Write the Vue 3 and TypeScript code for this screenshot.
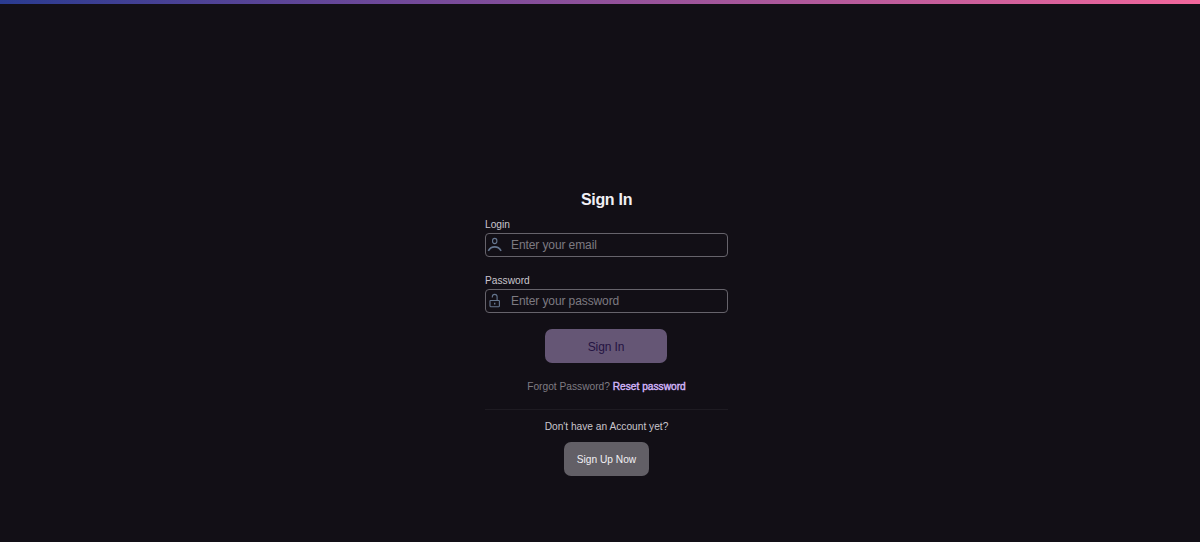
<template>
  <div class="page">
    <div class="top-bar"></div>
    <main class="content">
      <form class="form" @submit.prevent>
        <h1 class="title">Sign In</h1>

        <label class="label" for="login">Login</label>
        <div class="field">
          <svg class="icon" viewBox="0 0 16 16" fill="none">
            <ellipse cx="7.7" cy="4" rx="2.2" ry="2.6" stroke="currentColor" stroke-width="1.1" />
            <path d="M1.3 13.8C2.9 11 5 9.9 7.7 9.9s4.8 1.1 6.4 3.9" stroke="currentColor" stroke-width="1.6" />
          </svg>
          <input id="login" v-model="email" class="input" type="email" placeholder="Enter your email" />
        </div>

        <label class="label" for="password">Password</label>
        <div class="field">
          <svg class="icon" viewBox="0 0 16 16" fill="none" stroke="currentColor" stroke-width="1.1">
            <rect x="3" y="7.5" width="9.4" height="6.2" rx="0.6" />
            <path d="M5.3 4.6V3.8a2.4 2.4 0 0 1 4.8 0v3.7" />
            <path d="M7 10.6h1.4" stroke-width="1.6" />
          </svg>
          <input id="password" v-model="password" class="input" type="password" placeholder="Enter your password" />
        </div>

        <button class="btn-submit" type="submit" :disabled="!canSubmit">Sign In</button>

        <p class="forgot">Forgot Password? <a class="link" href="#">Reset password</a></p>

        <div class="signup">
          <p class="signup-text">Don't have an Account yet?</p>
          <button class="btn-signup" type="button">Sign Up Now</button>
        </div>
      </form>
    </main>
  </div>
</template>

<script setup lang="ts">
import { computed, ref } from 'vue'

const email = ref<string>('')
const password = ref<string>('')

const canSubmit = computed<boolean>(() => email.value !== '' && password.value !== '')
</script>

<style>
body {
  margin: 0;
  background: #120f16;
}
</style>

<style scoped>
.page {
  height: 100vh;
  display: flex;
  flex-direction: column;
  overflow: hidden;
  background: #120f16;
  font-family: "Liberation Sans", Arial, sans-serif;
  font-size: 10.2px;
  color: #c9c6cd;
}

.top-bar {
  height: 4px;
  flex-shrink: 0;
  background: linear-gradient(90deg, #2a3b90, #70499a 33%, #b0599b 67%, #f2679c);
}

.content {
  display: flex;
  justify-content: center;
  padding: 185px 0 0 13px;
}

.form {
  width: 243px;
  display: flex;
  flex-direction: column;
}

.title {
  margin: 0 0 13px;
  font-size: 16px;
  line-height: 21px;
  letter-spacing: -0.3px;
  text-align: center;
  color: #f1eff4;
}

.label {
  line-height: 12px;
  margin-top: -4px;
  margin-bottom: 2px;
}

.field {
  display: flex;
  align-items: center;
  box-sizing: border-box;
  height: 24px;
  margin-bottom: 22px;
  padding: 0 2px 0 1px;
  border: 1px solid #66636b;
  border-radius: 4px;
}

.icon {
  width: 16px;
  height: 16px;
  flex-shrink: 0;
  color: #65768f;
}

.input {
  flex: 1;
  min-width: 0;
  padding: 0 0 0 8px;
  border: none;
  outline: none;
  background: transparent;
  font-family: inherit;
  font-size: 12px;
  letter-spacing: -0.1px;
  color: #e5e1e9;
}

.input::placeholder {
  color: #7d7a81;
}

.btn-submit {
  align-self: center;
  width: 122px;
  height: 34px;
  margin-top: -6px;
  margin-right: 1px;
  padding: 2px 0 0;
  border: none;
  border-radius: 7px;
  background: #655675;
  font-family: inherit;
  font-size: 12px;
  letter-spacing: -0.1px;
  color: #241342;
}

.forgot {
  margin: 17px 0 15px;
  line-height: 14px;
  text-align: center;
  color: #7f7c83;
}

.link {
  color: #d2b5fa;
  text-decoration: none;
  -webkit-text-stroke: 0.4px currentColor;
}

.signup {
  display: flex;
  flex-direction: column;
  align-items: center;
  border-top: 1px solid #1e1b22;
}

.signup-text {
  margin: 10px 0 8px;
  line-height: 14px;
}

.btn-signup {
  width: 85px;
  height: 34px;
  padding: 0;
  border: none;
  border-radius: 7px;
  background: #625f66;
  font-family: inherit;
  font-size: 10.2px;
  color: #f1eff4;
}
</style>
